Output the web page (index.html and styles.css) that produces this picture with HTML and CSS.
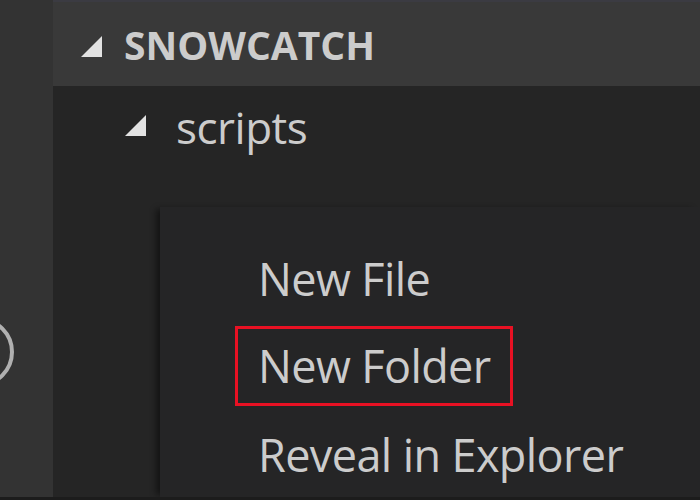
FILE: index.html
```html
<!DOCTYPE html>
<html>
<head>
<meta charset="utf-8">
<link rel="stylesheet" href="styles.css">
</head>
<body>
<div class="window">
  <div class="activity">
    <svg class="ring" width="53" height="80" viewBox="0 0 53 80">
      <circle cx="-21" cy="40" r="33" fill="none" stroke="#b0b0b0" stroke-width="4"/>
    </svg>
  </div>
  <div class="sidebar">
    <div class="header">
      <span class="twisty"></span>
      <span class="title">SNOWCATCH</span>
    </div>
    <div class="row">
      <span class="twisty"></span>
      <span class="label">scripts</span>
    </div>
    <div class="menu">
      <div class="item"><span class="text">New File</span></div>
      <div class="item"><span class="text highlight">New Folder</span></div>
      <div class="item"><span class="text">Reveal in Explorer</span></div>
    </div>
  </div>
</div>
<div class="bottom"></div>
</body>
</html>
```
FILE: styles.css
```css
html, body {
  margin: 0;
  padding: 0;
  width: 700px;
  height: 500px;
  overflow: hidden;
  background: #252525;
  font-family: "Open Sans", "Noto Sans", sans-serif;
}
.window {
  display: flex;
  height: 497px;
}
.activity {
  width: 53px;
  flex: none;
  background: #333333;
  padding-top: 312px;
  box-sizing: border-box;
}
.ring {
  display: block;
}
.sidebar {
  flex: 1;
  position: relative;
  background: #252525;
  overflow: hidden;
}
.header {
  height: 86px;
  box-sizing: border-box;
  border-top: 2px solid #3b3b42;
  background: #393939;
  display: flex;
  align-items: center;
  padding-left: 28px;
}
.twisty {
  width: 0;
  height: 0;
  border-style: solid;
  border-width: 0 0 21px 21px;
  border-color: transparent transparent #e2e2e2 transparent;
  flex: none;
}
.header .twisty {
  margin-top: 4px;
}
.title {
  margin-left: 22px;
  font-weight: 700;
  font-size: 39px;
  color: #cccccc;
}
.row {
  height: 88px;
  display: flex;
  align-items: center;
  padding-left: 72px;
}
.row .twisty {
  margin-top: -10px;
}
.label {
  margin-left: 30px;
  font-size: 44px;
  letter-spacing: -0.5px;
  color: #cccccc;
  margin-top: -6px;
}
.menu {
  position: absolute;
  left: 107px;
  top: 207px;
  right: 0;
  bottom: 0;
  background: #252526;
  box-shadow: -6px 0 6px -2px rgba(0,0,0,0.45);
  padding-top: 27px;
}
.item {
  height: 88px;
  display: flex;
  align-items: center;
  padding-left: 98px;
}
.text {
  font-size: 45px;
  letter-spacing: -0.6px;
  color: #cccccc;
}
.highlight {
  border: 3px solid #e81123;
  margin-left: -23px;
  padding: 0 19px 0 20px;
  line-height: 74px;
}
.bottom {
  height: 3px;
  background: #1c1c1c;
}
```
